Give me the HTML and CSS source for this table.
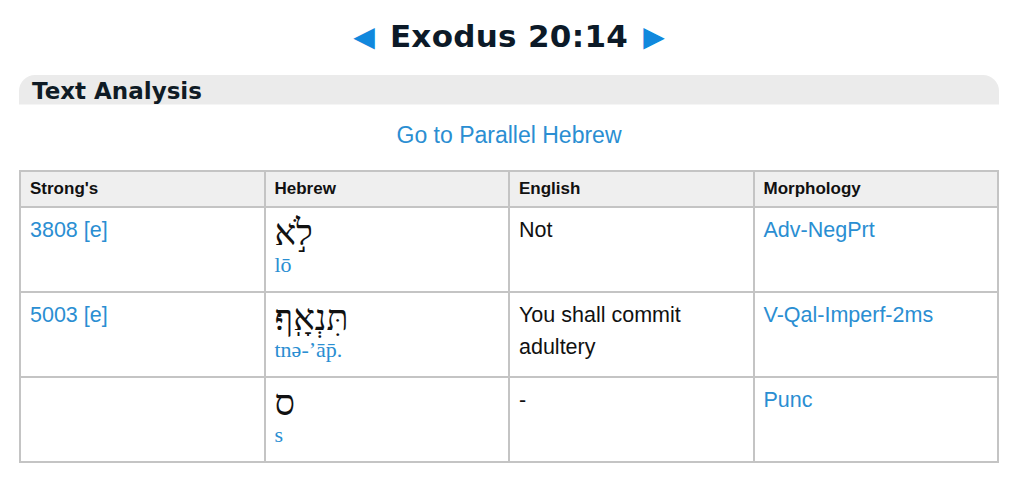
FILE: index.html
```html
<!DOCTYPE html>
<html>
<head>
<meta charset="utf-8">
<link rel="stylesheet" href="styles.css">
</head>
<body>
<div class="page">
  <div class="title">
    <span class="arrow">&#9664;</span>
    <span class="ref">Exodus 20:14</span>
    <span class="arrow">&#9654;</span>
  </div>
  <div class="bar">Text Analysis</div>
  <div class="parallel"><a>Go to Parallel Hebrew</a></div>
  <table class="grid">
    <thead>
      <tr><th>Strong's</th><th>Hebrew</th><th>English</th><th>Morphology</th></tr>
    </thead>
    <tbody>
      <tr>
        <td><a>3808 [e]</a></td>
        <td><div class="heb" dir="rtl">לֹ֣א</div><div class="tr">lō</div></td>
        <td>Not</td>
        <td><a>Adv-NegPrt</a></td>
      </tr>
      <tr>
        <td><a>5003 [e]</a></td>
        <td><div class="heb" dir="rtl">תִּנְאָֽף׃</div><div class="tr">tnə-’āp̄.</div></td>
        <td>You shall commit adultery</td>
        <td><a>V-Qal-Imperf-2ms</a></td>
      </tr>
      <tr>
        <td></td>
        <td><div class="heb" dir="rtl">ס</div><div class="tr">s</div></td>
        <td>-</td>
        <td><a>Punc</a></td>
      </tr>
    </tbody>
  </table>
</div>
</body>
</html>
```
FILE: styles.css
```css
html, body { margin: 0; padding: 0; background: #fff; }
.page { padding: 0 25px 0 19px; }
.title {
  display: flex; justify-content: center; align-items: center;
  gap: 15px; height: 72px;
  font-family: "DejaVu Sans", Verdana, sans-serif;
  font-weight: bold; color: #0c1a28;
}
.ref { font-size: 31px; letter-spacing: 0.3px; }
.arrow { color: #1188dd; font-size: 28px; }
.bar {
  margin-top: 3px; height: 30px; box-sizing: border-box;
  background: #ebebeb; border-radius: 16px 16px 0 0;
  padding: 1px 0 0 13px;
  font-family: "DejaVu Sans", Verdana, sans-serif;
  font-weight: bold; font-size: 23px; line-height: 30px; color: #0f1b25;
  border-bottom: 1px solid #f5f5f5;
}
.parallel {
  text-align: center; margin-top: 15px; height: 50px;
  font-family: "Liberation Sans", Arial, sans-serif; font-size: 23px;
  line-height: 30px;
}
a { color: #2a8ed2; text-decoration: none; }
.grid {
  width: 980px; border-collapse: collapse; table-layout: fixed;
  font-family: "Liberation Sans", Arial, sans-serif;
  font-size: 21.5px; color: #111;
  border: 2px solid #c4c4c4;
}
.grid th, .grid td {
  border: 2px solid #c4c4c4; text-align: left; vertical-align: top;
}
.grid th {
  background: #efefef; font-size: 17px; font-weight: bold;
  height: 34px; padding: 0 9px; vertical-align: middle; color: #111;
}
.grid td { height: 85px; padding: 6px 9px 0; line-height: 32px; box-sizing: border-box; }
.heb {
  font-family: "Liberation Serif", "DejaVu Serif", serif;
  font-size: 36px; line-height: 38px; text-align: left; color: #111;
}
.tr {
  font-family: "Liberation Serif", "Times New Roman", serif;
  font-size: 22px; line-height: 26px; color: #2a8ed2;
}
```
